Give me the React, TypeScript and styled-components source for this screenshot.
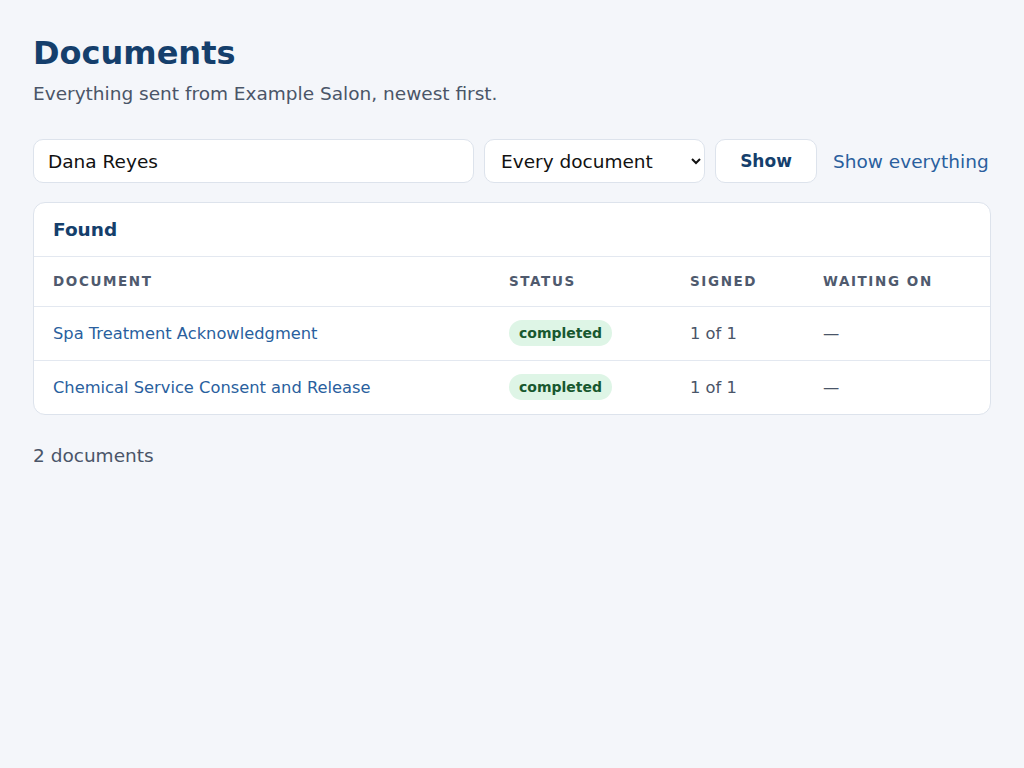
import React from "react";
import styled, { createGlobalStyle } from "styled-components";

const Global = createGlobalStyle`
  html, body { margin: 0; background: #f4f6fa; font-family: "DejaVu Sans", sans-serif; }
`;

const Page = styled.main`
  padding: 33px 33px;
  max-width: 958px;
`;
const Title = styled.h1`
  margin: 0; font-size: 32px; line-height: 40px; font-weight: 700; color: #153f6c;
`;
const Sub = styled.p`
  margin: 8px 0 0; font-size: 18.5px; line-height: 26px; color: #4a5568;
`;
const Form = styled.form`
  display: flex; gap: 10px; align-items: center; margin-top: 32px;
`;
const Input = styled.input`
  box-sizing: border-box; width: 441px; height: 44px; padding: 0 14px;
  border: 1px solid #dde3ec; border-radius: 10px; background: #fff;
  font: 18.5px "DejaVu Sans", sans-serif; color: #111;
`;
const Select = styled.select`
  box-sizing: border-box; width: 221px; height: 44px; padding: 0 10px 0 12px;
  border: 1px solid #dde3ec; border-radius: 10px; background: #fff;
  font: 18.5px "DejaVu Sans", sans-serif; color: #111;
`;
const Button = styled.button`
  box-sizing: border-box; width: 102px; height: 44px;
  border: 1px solid #dde3ec; border-radius: 10px; background: #fff;
  font: 700 17px "DejaVu Sans", sans-serif; color: #153f6c;
`;
const Link = styled.a`
  margin-left: 6px; font-size: 18.5px; color: #2a5f9e; text-decoration: none;
`;
const Card = styled.section`
  margin-top: 19px; background: #fff; border: 1px solid #dde3ec; border-radius: 12px; overflow: hidden;
`;
const CardHead = styled.h2`
  margin: 0; padding: 0 19px; height: 53px; display: flex; align-items: center;
  font-size: 18.5px; font-weight: 700; color: #153f6c; border-bottom: 1px solid #e3e8f0;
`;
const Table = styled.table`
  width: 100%; border-collapse: collapse; table-layout: fixed;
`;
const Th = styled.th<{ w?: string }>`
  box-sizing: border-box; text-align: left; height: 49px; padding: 0 0 0 19px; width: ${p => p.w || "auto"};
  font-size: 13.5px; font-weight: 700; letter-spacing: 1.6px; color: #4f5a6e;
  border-bottom: 1px solid #e3e8f0;
`;
const Td = styled.td`
  height: 53px; padding: 0 0 0 19px; font-size: 16.3px; color: #4a5568;
  tr:not(:last-child) > & { border-bottom: 1px solid #e3e8f0; }
`;
const DocLink = styled.a`
  color: #2a5f9e; text-decoration: none;
`;
const Badge = styled.span`
  display: inline-block; padding: 5px 10px; border-radius: 999px; background: #def5e6;
  color: #18582f; font-size: 14px; font-weight: 700;
`;
const Count = styled.p`
  margin: 30px 0 0; font-size: 18.5px; color: #4a5568;
`;

const docs = ["Spa Treatment Acknowledgment", "Chemical Service Consent and Release"];

export default function App() {
  return (
    <>
      <Global />
      <Page>
        <Title>Documents</Title>
        <Sub>Everything sent from Example Salon, newest first.</Sub>
        <Form onSubmit={e => e.preventDefault()}>
          <Input defaultValue="Dana Reyes" />
          <Select defaultValue="all"><option value="all">Every document</option></Select>
          <Button>Show</Button>
          <Link href="#">Show everything</Link>
        </Form>
        <Card>
          <CardHead>Found</CardHead>
          <Table>
            <thead>
              <tr>
                <Th w="456px">DOCUMENT</Th>
                <Th w="181px">STATUS</Th>
                <Th w="133px">SIGNED</Th>
                <Th>WAITING ON</Th>
              </tr>
            </thead>
            <tbody>
              {docs.map(d => (
                <tr key={d}>
                  <Td><DocLink href="#">{d}</DocLink></Td>
                  <Td><Badge>completed</Badge></Td>
                  <Td>1 of 1</Td>
                  <Td>—</Td>
                </tr>
              ))}
            </tbody>
          </Table>
        </Card>
        <Count>2 documents</Count>
      </Page>
    </>
  );
}
